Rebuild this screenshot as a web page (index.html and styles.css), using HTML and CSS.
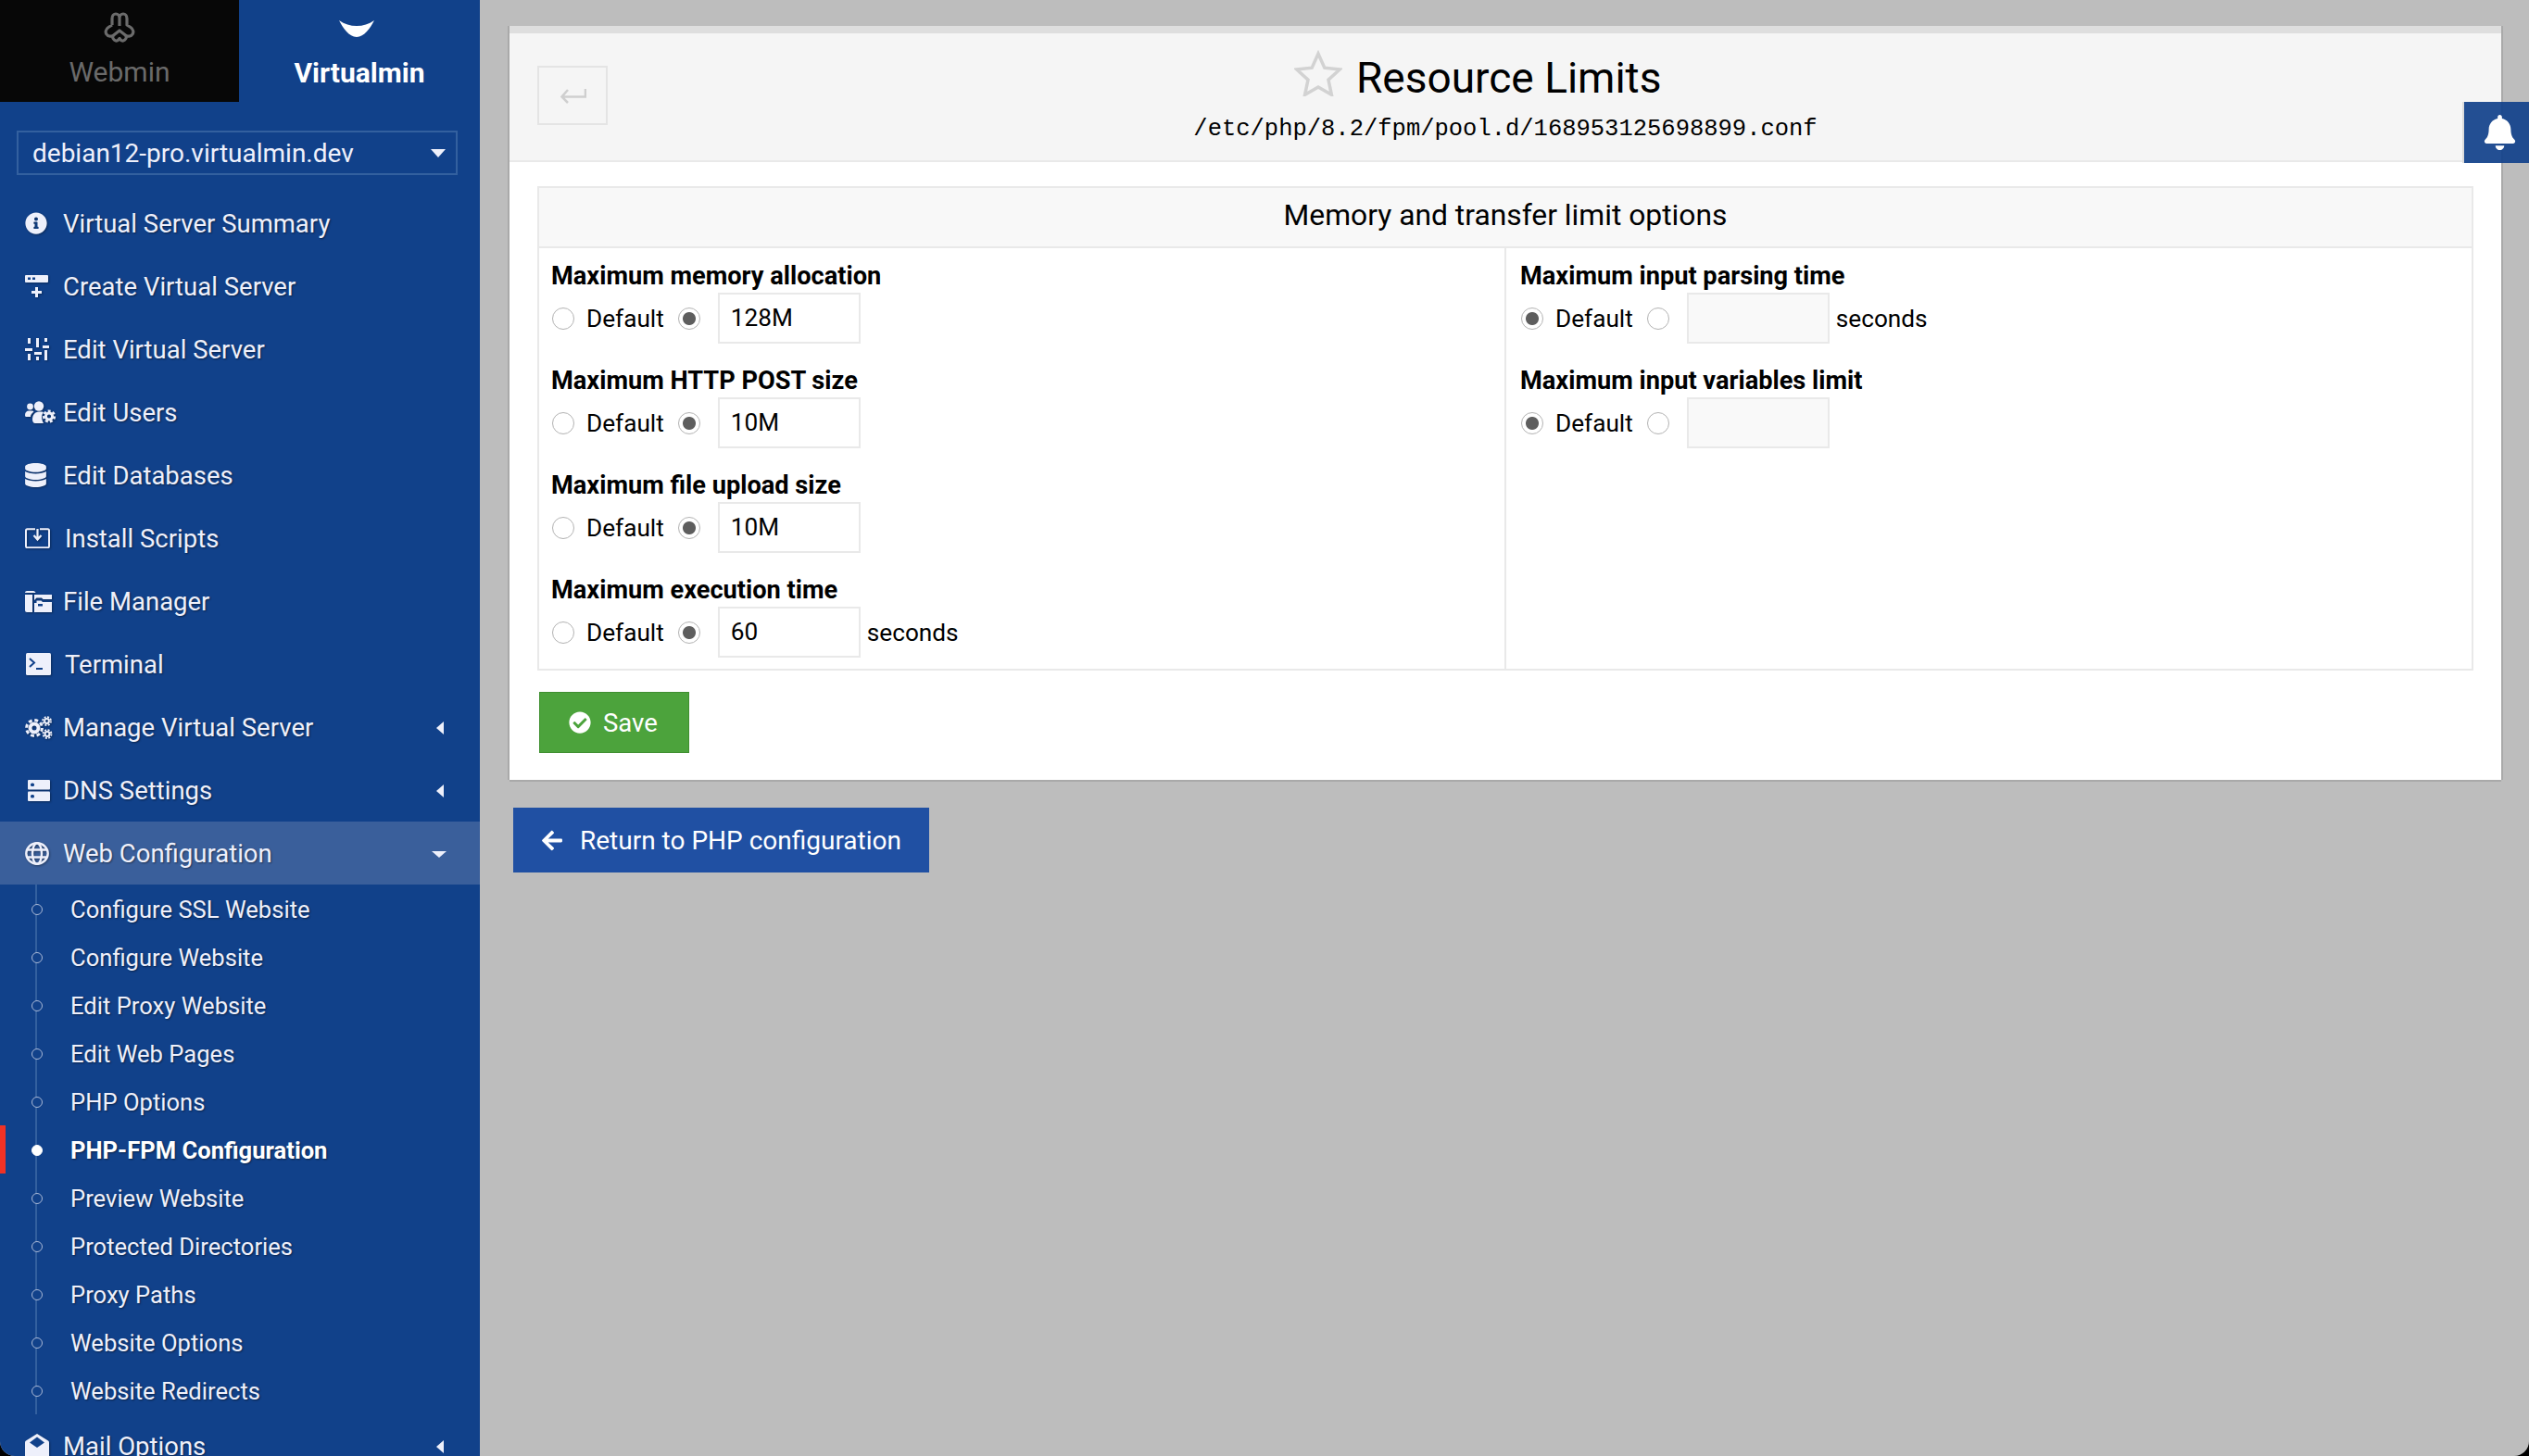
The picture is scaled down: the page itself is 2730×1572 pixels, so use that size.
FILE: index.html
```html
<!DOCTYPE html>
<html lang="en">
<head>
    <meta charset="UTF-8">
    <title>Resource Limits</title>
    <link rel="stylesheet" href="styles.css">
</head>
<body>
    <div class="app">
        <aside class="sidebar">
            <div class="tabs">
                <a class="tab tab-webmin">
                    <svg class="tab-icon" viewBox="0 0 34 33" width="34" height="33" fill="none" stroke="#6b6b6b" stroke-width="3.200" stroke-linejoin="round"><path d="M9 14V7c0-3 2-5 4-5 2.500 0 4 2 4 4v9M17 6c0-2 1.500-4 4-4 2 0 4 2 4 5v7l4 2.500c3 2 3.500 5.500 2 7.500-1.500 2.500-4.500 2.500-7 1.500 1 2.500-1 5-3 5.500-2 .5-3-1-4-2.500-1 1.500-2 3-4 2.500-2-.5-4-3-3-5.500-2.500 1-5.500 1-7-1.500-1.500-2-1-5.500 2-7.500L9 14"/><path d="M10 25.500l7-5.500 7 5.500"/></svg>
                    <span>Webmin</span>
                </a>
                <a class="tab tab-virtualmin">
                    <svg class="tab-icon" viewBox="0 0 38 18" width="38" height="18"><path d="M0 0c6 4 12 6 19 6s13-2 19-6c-4 8-11 18-19 18S4 8 0 0z" fill="#fff"/></svg>
                    <span>Virtualmin</span>
                </a>
            </div>

            <div class="domain-select">
                <span>debian12-pro.virtualmin.dev</span>
                <i class="caret-down"></i>
            </div>

            <nav class="menu">
                <a class="menu-item">
                    <svg class="icon" width="24" height="24" viewBox="0 0 512 512" fill="#eef0fb"><path d="M256 8C119 8 8 119 8 256s111 248 248 248 248-111 248-248S393 8 256 8zm0 110c23.200 0 42 18.800 42 42s-18.800 42-42 42-42-18.800-42-42 18.800-42 42-42zm56 254c0 6.600-5.400 12-12 12h-88c-6.600 0-12-5.400-12-12v-24c0-6.600 5.400-12 12-12h12v-64h-12c-6.600 0-12-5.400-12-12v-24c0-6.600 5.400-12 12-12h64c6.600 0 12 5.400 12 12v100h12c6.600 0 12 5.400 12 12v24z"/></svg>
                    <span>Virtual Server Summary</span>
                </a>
                <a class="menu-item">
                    <svg class="icon" width="25" height="24" viewBox="0 0 25 24" fill="#eef0fb"><path d="M1 0h23a1 1 0 0 1 1 1v6a1 1 0 0 1-1 1H1a1 1 0 0 1-1-1V1a1 1 0 0 1 1-1z"/><rect x="3" y="2.500" width="3" height="2.500" fill="#11418a"/><rect x="8" y="2.500" width="3" height="2.500" fill="#11418a"/><path d="M11 13h3v4h4v3h-4v4h-3v-4H7v-3h4z"/></svg>
                    <span>Create Virtual Server</span>
                </a>
                <a class="menu-item">
                    <svg class="icon" width="26" height="24" viewBox="0 0 26 24" fill="#eef0fb"><path d="M3 0h3v6H3zM12 0h3v10h-3zM21 0h3v4h-3zM0 11h8v3H0zM3 17h3v7H3zM10 15h8v3h-8zM12 20h3v4h-3zM19 8h7v3h-7zM21 13h3v11h-3z"/></svg>
                    <span>Edit Virtual Server</span>
                </a>
                <a class="menu-item">
                    <svg class="icon" width="33" height="24" viewBox="0 0 33 24" fill="#eef0fb"><circle cx="5.500" cy="6" r="3.400"/><path d="M0 15c0-3 2-4.500 4-4.500h3.500c1 0 1.500.5 2 1-2 1.500-3.500 3-3.500 5.500H1.500C.5 17 0 16.500 0 15z"/><circle cx="15" cy="5.500" r="5.200"/><path d="M8 20c0-5 3-8.500 7-8.500h3c1 0 1.500.2 2 .6-2.500 3-2.500 7.400 0 11.900H11c-2 0-3-2-3-4z"/><circle cx="26" cy="16.500" r="3.600" fill="none" stroke="#eef0fb" stroke-width="3"/><circle cx="26" cy="16.500" r="5.800" fill="none" stroke="#eef0fb" stroke-width="2.600" stroke-dasharray="2.900 2.170"/></svg>
                    <span>Edit Users</span>
                </a>
                <a class="menu-item">
                    <svg class="icon" width="23" height="26" viewBox="0 0 448 512" fill="#eef0fb"><path d="M448 73.143v45.714C448 159.143 347.667 192 224 192S0 159.143 0 118.857V73.143C0 32.857 100.333 0 224 0s224 32.857 224 73.143zM448 176v102.857C448 319.143 347.667 352 224 352S0 319.143 0 278.857V176c48.125 33.143 136.208 48.572 224 48.572S399.874 209.143 448 176zm0 160v102.857C448 479.143 347.667 512 224 512S0 479.143 0 438.857V336c48.125 33.143 136.208 48.572 224 48.572S399.874 369.143 448 336z"/></svg>
                    <span>Edit Databases</span>
                </a>
                <a class="menu-item menu-item-nudge">
                    <svg class="icon" width="27" height="22" viewBox="0 0 27 22" fill="none"><path d="M7 1.200H2.500A1.500 1.500 0 0 0 1 2.700v17a1.500 1.500 0 0 0 1.500 1.500h22a1.500 1.500 0 0 0 1.500-1.500v-17a1.500 1.500 0 0 0-1.500-1.500H20M7 1.200h4M16 1.200h4" stroke="#eef0fb" stroke-width="2"/><path d="M13.500 1v10M9.500 8l4 4.500 4-4.500" stroke="#eef0fb" stroke-width="2.200"/></svg>
                    <span>Install Scripts</span>
                </a>
                <a class="menu-item">
                    <svg class="icon" width="29" height="23" viewBox="0 0 29 23" fill="#eef0fb"><path d="M0 2c0-1.100.9-2 2-2h7c1.500 0 2 1 2.500 2H0zM0 4h8v19H2a2 2 0 0 1-2-2z"/><path d="M10 4h19v5H19.500l-1.500-1.500h-5.500L10 10zM10 13h2.500v-2.500h5L19 12h10v11H10z"/><rect x="14" y="14" width="5" height="2.500" fill="#11418a"/></svg>
                    <span>File Manager</span>
                </a>
                <a class="menu-item menu-item-nudge">
                    <svg class="icon" width="28" height="24" viewBox="0 0 28 24" fill="#eef0fb"><rect x="1" y="0" width="27" height="24" rx="1.500"/><path d="M5 6l5 4.500L5 15M12 17h7" fill="none" stroke="#11418a" stroke-width="2"/></svg>
                    <span>Terminal</span>
                </a>
                <a class="menu-item">
                    <svg class="icon" width="30" height="25" viewBox="0 0 30 25" fill="none" stroke="#eef0fb"><circle cx="10" cy="13" r="4.500" stroke-width="4"/><circle cx="10" cy="13" r="8.400" stroke-width="3" stroke-dasharray="3.900 2.700"/><circle cx="23.500" cy="5.500" r="2.400" stroke-width="2"/><circle cx="23.500" cy="5.500" r="4.400" stroke-width="2" stroke-dasharray="2 1.460"/><circle cx="24" cy="19.500" r="2.400" stroke-width="2"/><circle cx="24" cy="19.500" r="4.400" stroke-width="2" stroke-dasharray="2 1.460"/></svg>
                    <span>Manage Virtual Server</span>
                    <i class="caret-left"></i>
                </a>
                <a class="menu-item">
                    <svg class="icon icon-dns" width="24" height="23" viewBox="0 0 24 23" fill="#eef0fb"><rect x="0" y="0" width="24" height="10.500" rx="1"/><rect x="0" y="12.500" width="24" height="10.500" rx="1"/><rect x="3" y="3.500" width="4" height="3.500" rx="1.500" fill="#11418a"/><rect x="3" y="16" width="4" height="3.500" rx="1.500" fill="#11418a"/></svg>
                    <span>DNS Settings</span>
                    <i class="caret-left"></i>
                </a>
                <a class="menu-item menu-item-open">
                    <svg class="icon" width="26" height="25" viewBox="0 0 26 25" fill="none" stroke="#eef0fb" stroke-width="2.400"><ellipse cx="13" cy="12.500" rx="11.700" ry="11.200"/><ellipse cx="13" cy="12.500" rx="5" ry="11.200"/><path d="M2 8.500h22M2 16.500h22"/></svg>
                    <span>Web Configuration</span>
                    <i class="caret-down caret-small"></i>
                </a>
                <div class="submenu">
                    <a class="sub-item">Configure SSL Website</a>
                    <a class="sub-item">Configure Website</a>
                    <a class="sub-item">Edit Proxy Website</a>
                    <a class="sub-item">Edit Web Pages</a>
                    <a class="sub-item">PHP Options</a>
                    <a class="sub-item sub-item-active">PHP-FPM Configuration</a>
                    <a class="sub-item">Preview Website</a>
                    <a class="sub-item">Protected Directories</a>
                    <a class="sub-item">Proxy Paths</a>
                    <a class="sub-item">Website Options</a>
                    <a class="sub-item">Website Redirects</a>
                </div>
                <a class="menu-item">
                    <svg class="icon" width="26" height="26" viewBox="0 0 26 26" fill="#eef0fb"><path d="M13 0l12 7.500c.6.400 1 1 1 1.700V24a2 2 0 0 1-2 2H2a2 2 0 0 1-2-2V9.200c0-.7.400-1.300 1-1.700z"/><path d="M5 9.500l8-6 8 6-8 5.500z" fill="#11418a"/></svg>
                    <span>Mail Options</span>
                    <i class="caret-left"></i>
                </a>
            </nav>
        </aside>

        <main class="content">
            <section class="panel">
                <header class="panel-head">
                    <a class="back-btn">
                        <svg viewBox="0 0 29 17" width="29" height="17" fill="none" stroke="#cfcfcf" stroke-width="2.500"><path d="M28 1v8.500H3M9 2L2.500 9.500 9 16"/></svg>
                    </a>
                    <div class="page-title">
                        <h1>
                            <svg class="star" viewBox="0 0 52 50" width="52" height="50" fill="none" stroke="#d2d2d2" stroke-width="3.500"><path d="M26 4l6.800 15.200 16.400 1.800-12.200 11.100 3.400 16.200L26 40l-14.400 8.300L15 32.100 2.800 21l16.400-1.800z"/></svg>
                            <span>Resource Limits</span>
                        </h1>
                        <p class="file-path">/etc/php/8.2/fpm/pool.d/168953125698899.conf</p>
                    </div>
                </header>

                <div class="panel-body">
                    <div class="options-table">
                        <h2 class="options-title">Memory and transfer limit options</h2>
                        <div class="options-grid">
                            <div class="options-col">
                                <div class="field">
                                    <label class="field-label">Maximum memory allocation</label>
                                    <div class="field-row">
                                        <input class="radio" type="radio" name="memory"><span class="radio-label">Default</span>
                                        <input class="radio" type="radio" name="memory" checked>
                                        <input class="text-input" type="text" value="128M">
                                    </div>
                                </div>
                                <div class="field">
                                    <label class="field-label">Maximum HTTP POST size</label>
                                    <div class="field-row">
                                        <input class="radio" type="radio" name="post"><span class="radio-label">Default</span>
                                        <input class="radio" type="radio" name="post" checked>
                                        <input class="text-input" type="text" value="10M">
                                    </div>
                                </div>
                                <div class="field">
                                    <label class="field-label">Maximum file upload size</label>
                                    <div class="field-row">
                                        <input class="radio" type="radio" name="upload"><span class="radio-label">Default</span>
                                        <input class="radio" type="radio" name="upload" checked>
                                        <input class="text-input" type="text" value="10M">
                                    </div>
                                </div>
                                <div class="field">
                                    <label class="field-label">Maximum execution time</label>
                                    <div class="field-row">
                                        <input class="radio" type="radio" name="exec"><span class="radio-label">Default</span>
                                        <input class="radio" type="radio" name="exec" checked>
                                        <input class="text-input" type="text" value="60">
                                        <span class="unit">seconds</span>
                                    </div>
                                </div>
                            </div>
                            <div class="options-col">
                                <div class="field">
                                    <label class="field-label">Maximum input parsing time</label>
                                    <div class="field-row">
                                        <input class="radio" type="radio" name="parsing" checked><span class="radio-label">Default</span>
                                        <input class="radio" type="radio" name="parsing">
                                        <input class="text-input" type="text" disabled>
                                        <span class="unit">seconds</span>
                                    </div>
                                </div>
                                <div class="field">
                                    <label class="field-label">Maximum input variables limit</label>
                                    <div class="field-row">
                                        <input class="radio" type="radio" name="vars" checked><span class="radio-label">Default</span>
                                        <input class="radio" type="radio" name="vars">
                                        <input class="text-input" type="text" disabled>
                                    </div>
                                </div>
                            </div>
                        </div>
                    </div>
                    <button class="btn btn-save" type="button">
                        <svg viewBox="0 0 512 512" width="24" height="24" fill="#fff"><path d="M504 256c0 136.967-111.033 248-248 248S8 392.967 8 256 119.033 8 256 8s248 111.033 248 248zM227.314 387.314l184-184c6.248-6.248 6.248-16.379 0-22.627l-22.627-22.627c-6.248-6.249-16.379-6.249-22.628 0L216 308.118l-70.059-70.059c-6.248-6.248-16.379-6.248-22.628 0l-22.627 22.627c-6.248 6.248-6.248 16.379 0 22.627l104 104c6.249 6.249 16.379 6.249 22.628.001z"/></svg>
                        Save
                    </button>
                </div>
            </section>

            <button class="btn btn-return" type="button">
                <svg viewBox="0 0 448 512" width="22" height="25" fill="#fff"><path d="M257.500 445.100l-22.200 22.200c-9.400 9.400-24.600 9.400-33.900 0L7 273c-9.400-9.400-9.400-24.600 0-33.900L201.400 44.700c9.400-9.400 24.600-9.400 33.900 0l22.200 22.200c9.500 9.500 9.300 25-.4 34.300L136.600 216H424c13.300 0 24 10.700 24 24v32c0 13.300-10.700 24-24 24H136.600l120.500 114.800c9.800 9.300 10 24.800.4 34.300z"/></svg>
                Return to PHP configuration
            </button>

            <a class="bell">
                <svg viewBox="0 0 448 512" width="35" height="38" fill="#fff"><path d="M224 512c35.320 0 63.970-28.650 63.970-64H160.030c0 35.350 28.650 64 63.970 64zm215.390-149.710c-19.320-20.760-55.470-51.990-55.470-154.290 0-77.700-54.480-139.900-127.940-155.160V32c0-17.670-14.320-32-31.980-32s-31.980 14.330-31.980 32v20.840C118.560 68.100 64.080 130.300 64.080 208c0 102.300-36.150 133.530-55.470 154.290-6 6.450-8.660 14.160-8.610 21.710.11 16.400 12.980 32 32.100 32h383.800c19.120 0 32-15.600 32.100-32 .05-7.550-2.610-15.270-8.610-21.710z"/></svg>
            </a>
        </main>
    </div>
</body>
</html>
```

FILE: styles.css
```css
* {
    box-sizing: border-box;
}

html, body {
    margin: 0;
    height: 100%;
    overflow: hidden;
    background: #000;
}

body {
    font-family: Roboto, "Liberation Sans", sans-serif;
    color: #000;
}

.app {
    display: flex;
    height: 1572px;
    background: #bdbdbd;
    border-radius: 0 0 16px 16px;
    overflow: hidden;
}

/* sidebar */
.sidebar {
    width: 518px;
    flex: none;
    background: #11418a;
    overflow: hidden;
    color: #eef0fb;
}

.tabs {
    display: flex;
    height: 110px;
}

.tab {
    display: flex;
    flex-direction: column;
    align-items: center;
    font-size: 30px;
}

.tab-webmin {
    width: 258px;
    background: #070707;
    color: #6a6a6a;
    padding-top: 13px;
}

.tab-webmin span {
    margin-top: 14px;
}

.tab-virtualmin {
    flex: 1;
    color: #fff;
    font-weight: 700;
    padding-top: 22px;
}

.tab-virtualmin .tab-icon {
    margin-right: 6px;
}

.tab-virtualmin span {
    margin-top: 21px;
}

.domain-select {
    display: flex;
    align-items: center;
    justify-content: space-between;
    height: 48px;
    margin: 31px 24px 18px 18px;
    padding: 0 11px 0 15px;
    border: 2px solid #33609f;
    font-size: 28px;
}

.caret-down {
    width: 0;
    height: 0;
    border-left: 8px solid transparent;
    border-right: 8px solid transparent;
    border-top: 9px solid #eef0fb;
}

.caret-small {
    margin-top: 2px;
    border-top-width: 7px;
}

.caret-left {
    width: 0;
    height: 0;
    border-top: 7px solid transparent;
    border-bottom: 7px solid transparent;
    border-right: 8px solid #eef0fb;
    margin: 2px 3px 0 0;
}

.menu {
    display: flex;
    flex-direction: column;
}

.menu-item {
    display: grid;
    grid-template-columns: 41px 1fr auto;
    align-items: center;
    height: 68px;
    padding: 0 36px 0 27px;
    font-size: 27.500px;
    text-shadow: 1px 1px 2px rgba(0, 0, 0, 0.45);
}

.menu-item-nudge span {
    margin-left: 2px;
}

.icon {
    filter: drop-shadow(1px 1px 1px rgba(0, 0, 0, 0.35));
}

.icon-dns {
    margin-left: 3px;
}

.menu-item-open {
    background: #3a5f9b;
}

.submenu {
    position: relative;
    margin-left: 38px;
    border-left: 2px solid #33609f;
}

.sub-item {
    position: relative;
    display: flex;
    align-items: center;
    height: 52px;
    padding: 2px 0 0 36px;
    font-size: 25.600px;
    text-shadow: 1px 1px 2px rgba(0, 0, 0, 0.45);
}

.sub-item::before {
    content: "";
    position: absolute;
    left: -6px;
    top: 21px;
    width: 10px;
    height: 10px;
    border-radius: 50%;
    border: 1.500px solid #a9b8d6;
    background: #11418a;
}

.sub-item-active {
    font-weight: 700;
    color: #fff;
}

.sub-item-active::before {
    background: #fff;
    border-color: #fff;
}

.sub-item-active::after {
    content: "";
    position: absolute;
    left: -40px;
    top: 0;
    width: 6px;
    height: 52px;
    background: #f03225;
}

/* main area */
.content {
    position: relative;
    flex: 1;
    padding: 28px 30px 0 32px;
}

.panel {
    background: #fff;
    border-top: 8px solid #dedede;
    box-shadow: -2px 0 0 #a9a9a9, 2px 0 0 #a9a9a9, 0 2px 0 #a9a9a9;
}

.panel-head {
    position: relative;
    height: 139px;
    background: #f5f5f5;
    border-bottom: 2px solid #e9e9e9;
    padding-top: 1px;
}

.back-btn {
    position: absolute;
    left: 30px;
    top: 35px;
    display: flex;
    align-items: center;
    justify-content: center;
    width: 76px;
    height: 64px;
    border: 2px solid #e4e4e4;
}

.page-title {
    text-align: center;
}

h1 {
    margin: 0;
    height: 66px;
    padding-top: 16px;
    font-size: 46px;
    font-weight: 400;
    line-height: 62px;
}

h1 span {
    position: relative;
    display: inline-block;
    left: -2px;
}

/* the star hangs off the title, the title alone is centred */
.star {
    display: inline-block;
    vertical-align: top;
    width: 52px;
    margin: 1px 6px 0 -58px;
}

.file-path {
    margin: 22px 0 0;
    font-family: "Liberation Mono", monospace;
    font-size: 25.500px;
    line-height: 30px;
}

.panel-body {
    padding: 26px 30px 29px;
}

.options-table {
    border: 2px solid #e9e9e9;
}

.options-title {
    height: 65px;
    margin: 0;
    background: #f8f8f8;
    border-bottom: 2px solid #e9e9e9;
    font-size: 31.800px;
    font-weight: 400;
    line-height: 58px;
    text-align: center;
}

.options-grid {
    display: grid;
    grid-template-columns: 1042px 1fr;
    height: 454px;
}

.options-col {
    padding: 13px 13px 0;
}

.options-col + .options-col {
    border-left: 2px solid #e9e9e9;
    padding-left: 15px;
}

.field {
    height: 113px;
}

.field:nth-child(4) {
    height: 100px;
}

.field-label {
    display: block;
    height: 32px;
    margin-bottom: 3px;
    font-size: 27.200px;
    font-weight: 700;
    line-height: 34px;
}

.field-row {
    display: flex;
    align-items: center;
    font-size: 26.200px;
}

.radio {
    appearance: none;
    width: 24px;
    height: 24px;
    margin: 0 0 0 1px;
    border: 1.500px solid #b3b3b3;
    border-radius: 50%;
    background: #fff;
}

.radio:checked {
    background: radial-gradient(circle, #5e5e5e 0 6.500px, #fff 7.500px);
}

.radio-label {
    margin: 0 14px 0 13px;
}

.text-input {
    width: 154px;
    height: 55px;
    margin-left: 19px;
    padding: 0 12px 2px;
    border: 2px solid #e9e9e9;
    border-radius: 0;
    background: #fff;
    color: #000;
    font: inherit;
    outline: none;
}

.text-input:disabled {
    background: #f9f9f9;
}

.unit {
    margin-left: 7px;
}

.btn {
    display: flex;
    align-items: center;
    border-radius: 0;
    color: #fff;
    font-family: inherit;
}

.btn-save {
    height: 66px;
    width: 162px;
    margin: 23px 0 0 2px;
    padding: 0 0 0 31px;
    gap: 13px;
    background: #4ca33c;
    border: 1px solid #3f8f30;
    font-size: 27.500px;
}

.btn-return {
    height: 70px;
    width: 449px;
    margin: 30px 0 0 4px;
    padding: 0 0 0 31px;
    gap: 19px;
    background: #2050a3;
    border: 0;
    font-size: 28px;
}

.bell {
    position: absolute;
    right: 0;
    top: 110px;
    display: flex;
    align-items: center;
    justify-content: center;
    width: 70px;
    height: 66px;
    padding-left: 6px;
    background: rgba(18, 66, 139, 0.93);
    box-shadow: -2px 0 0 #dcdcdc;
}
```
